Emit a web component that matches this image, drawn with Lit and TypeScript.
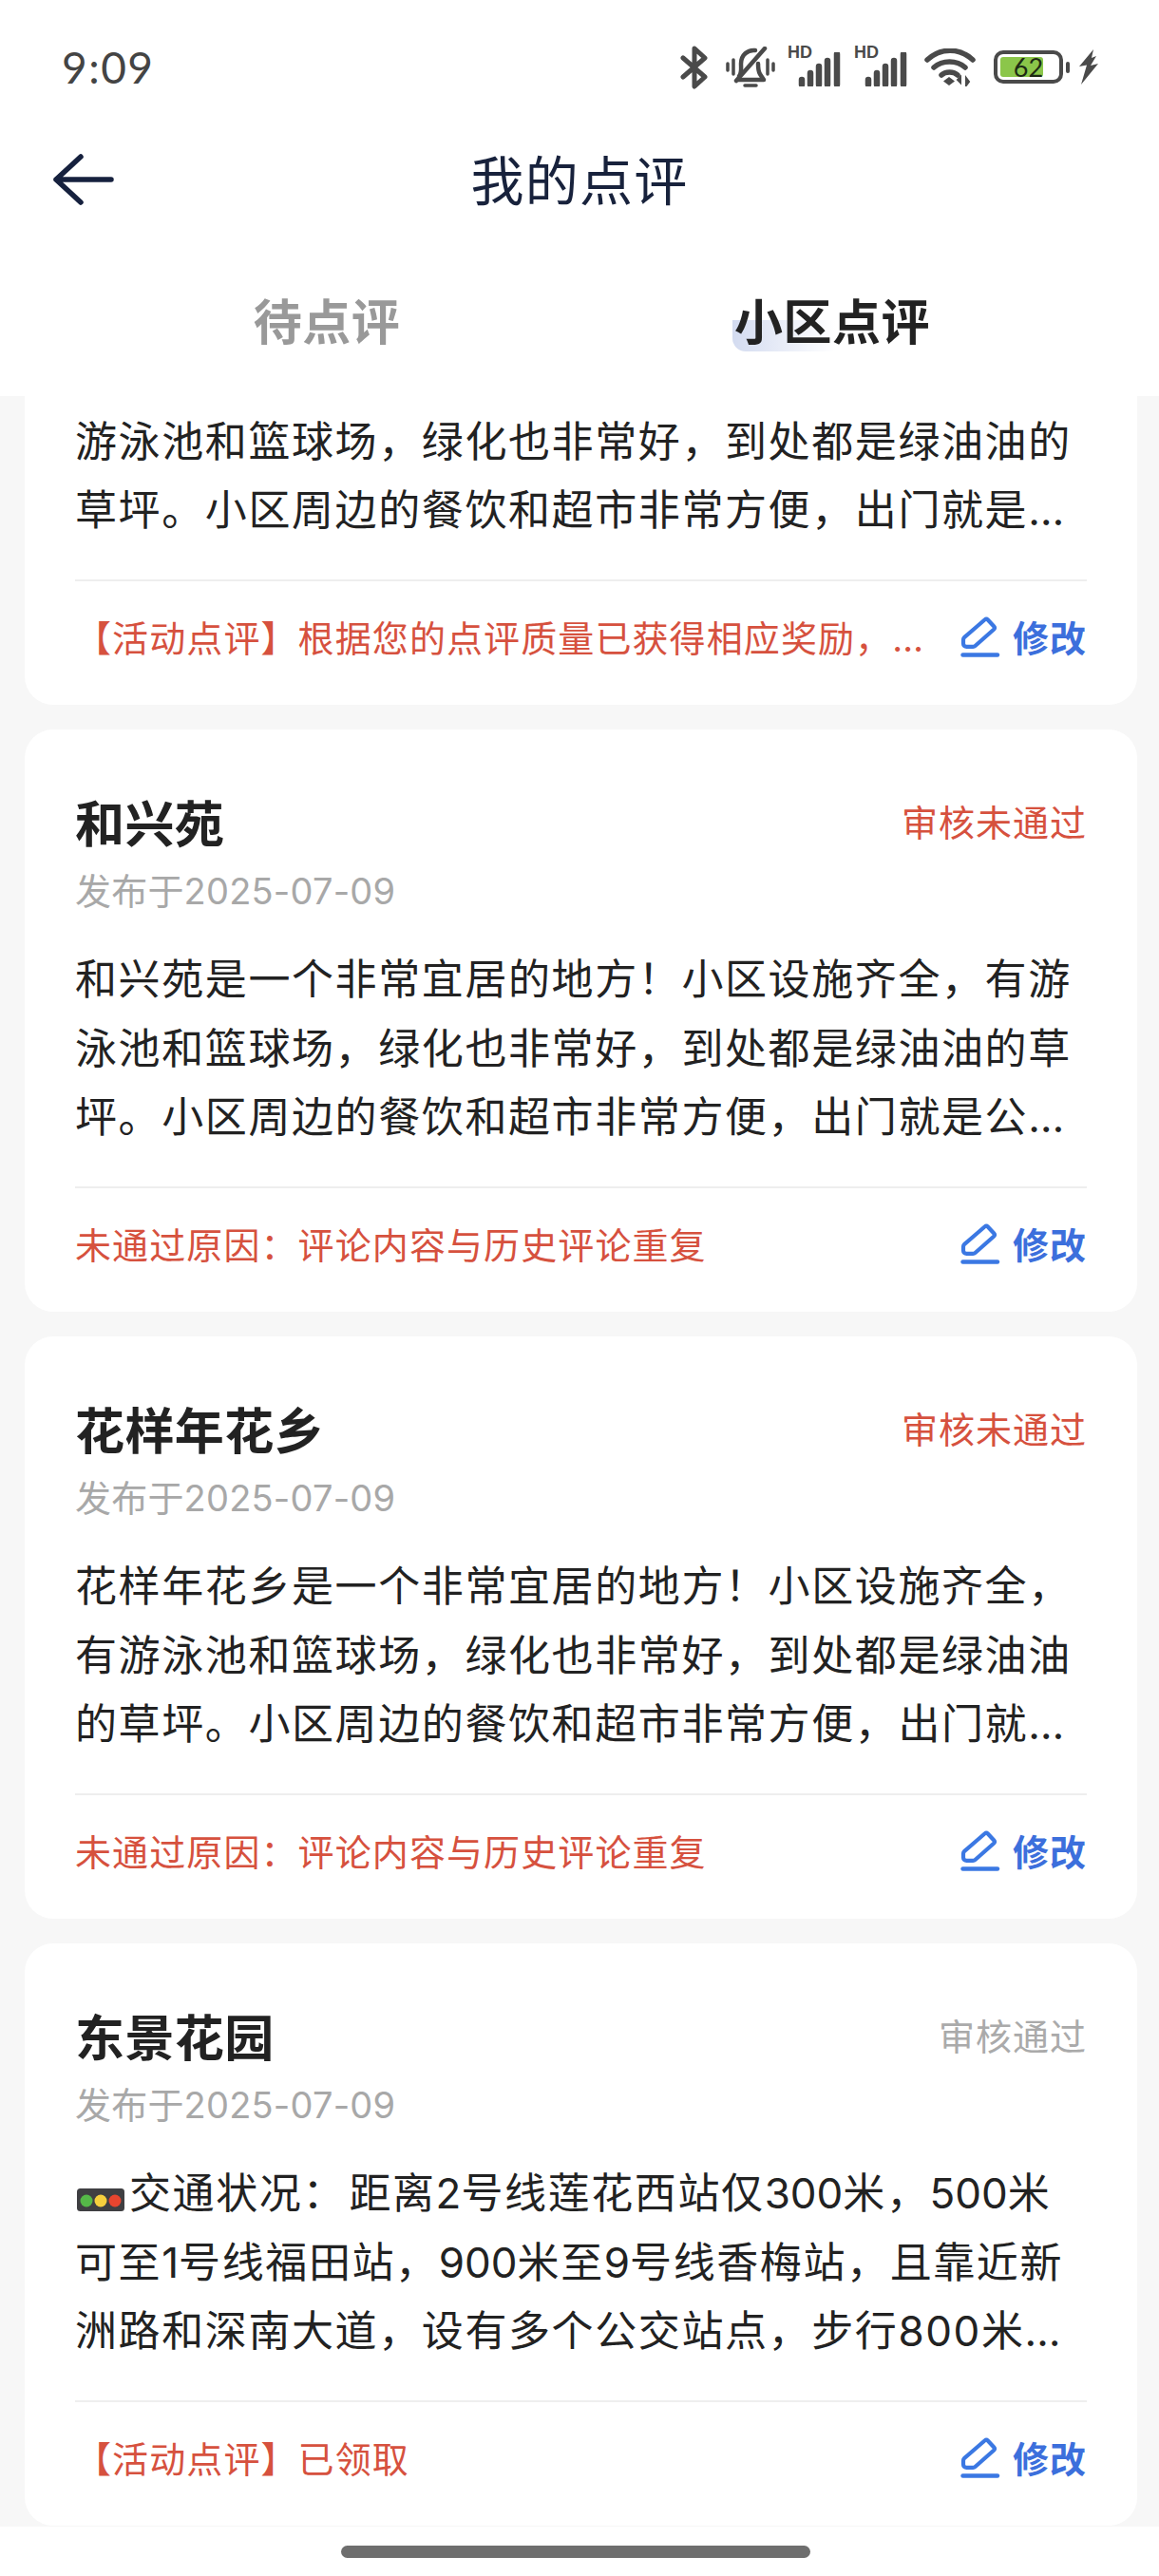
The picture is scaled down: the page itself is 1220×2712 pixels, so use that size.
import { LitElement, css, html, svg } from 'lit';
import { customElement } from 'lit/decorators.js';

interface Review {
  name: string;
  date: string;
  status: string;
  passed: boolean;
  body: unknown;
  note: string;
}

const trafficLights = html`<svg class="lights" width="50" height="24" viewBox="0 0 50 24"><rect width="50" height="24" rx="3.500" fill="#3f3f42"/><circle cx="10" cy="13" r="6.500" fill="#55b848"/><circle cx="25" cy="13" r="6.500" fill="#f6cf3d"/><circle cx="40" cy="13" r="6.500" fill="#e8452f"/></svg>`;

const REVIEWS: Review[] = [
  {
    name: '星河花园',
    date: '发布于2025-07-09',
    status: '审核通过',
    passed: true,
    body: '星河花园是一个非常宜居的地方！小区设施齐全，有游泳池和篮球场，绿化也非常好，到处都是绿油油的草坪。小区周边的餐饮和超市非常方便，出门就是公交站，生活非常便利。',
    note: '【活动点评】根据您的点评质量已获得相应奖励，请前往查看',
  },
  {
    name: '和兴苑',
    date: '发布于2025-07-09',
    status: '审核未通过',
    passed: false,
    body: '和兴苑是一个非常宜居的地方！小区设施齐全，有游泳池和篮球场，绿化也非常好，到处都是绿油油的草坪。小区周边的餐饮和超市非常方便，出门就是公交站，生活非常便利。',
    note: '未通过原因：评论内容与历史评论重复',
  },
  {
    name: '花样年花乡',
    date: '发布于2025-07-09',
    status: '审核未通过',
    passed: false,
    body: '花样年花乡是一个非常宜居的地方！小区设施齐全，有游泳池和篮球场，绿化也非常好，到处都是绿油油的草坪。小区周边的餐饮和超市非常方便，出门就是公交站，生活非常便利。',
    note: '未通过原因：评论内容与历史评论重复',
  },
  {
    name: '东景花园',
    date: '发布于2025-07-09',
    status: '审核通过',
    passed: true,
    // digits run narrower than the CJK tracking in the original
    body: html`${trafficLights}交通状况<span class="wide">：</span>距离<span class="num">2</span>号线莲花西站仅<span class="num">300</span>米，<span class="num">500</span>米可至<span class="num">1</span>号线福田站，<span class="num">900</span>米至<span class="num">9</span>号线香梅站，且靠近新洲路和深南大道，设有多个公交站点，步行800米即可到达地铁站，出行非常方便。`,
    note: '【活动点评】已领取',
  },
];

const bars = svg`
  <path d="M7 29v5M16 22v12M25 15v19M34 9v25M44 2v32" stroke="#4a4a4a" stroke-width="6.500" stroke-linecap="round" fill="none"/>
`;

const signal = html`
  <div class="signal">
    <span class="hd">HD</span>
    <svg width="51" height="36" viewBox="0 0 51 36">${bars}</svg>
  </div>
`;

const pencil = html`
  <svg width="42" height="44" viewBox="0 0 42 44" fill="none" stroke="#3b78e3" stroke-width="4.200" stroke-linecap="round" stroke-linejoin="round">
    <path d="M25.500 4.500c1.200-1 2.300-1 3.300 0l6.500 7c1 1.100 1 2.100 0 3L15.500 32c-.7.600-1.400.8-2.300.8H6.500c-2 0-3.500-1.300-3.500-3.300v-4c0-1.100.4-1.900 1.200-2.600z"/>
    <path d="M2.500 41.500h36.500" stroke-width="4.400"/>
  </svg>
`;

@customElement('app-root')
class AppRoot extends LitElement {
  static styles = css`
    :host {
      display: block;
      width: 1220px;
      height: 2712px;
      background: #fff;
      font-family: Inter, 'Noto Sans CJK SC', sans-serif;
      color: #222;
    }

    .page {
      display: flex;
      flex-direction: column;
      height: 2712px;
    }

    .status-bar {
      display: flex;
      align-items: center;
      height: 129px;
      padding: 12px 64px 0 65px;
      box-sizing: border-box;
    }

    .time {
      font-family: Lato, sans-serif;
      font-size: 46px;
      letter-spacing: 1.500px;
      color: #444;
      margin-right: auto;
    }

    .status-icons {
      display: flex;
      align-items: center;
    }

    .bt { margin-right: 18px; }
    .bell { margin-right: 13px; }
    .signal {
      position: relative;
      width: 59px;
      height: 40px;
      margin-right: 11px;
      display: flex;
      align-items: flex-end;
      justify-content: flex-end;
    }
    .hd {
      position: absolute;
      left: 0;
      top: -5px;
      font-family: 'Liberation Sans', sans-serif;
      font-weight: 700;
      font-size: 18px;
      line-height: 18px;
      color: #4a4a4a;
    }
    .wifi { margin: 0 19px 0 4px; }

    .battery {
      position: relative;
      width: 73px;
      height: 35px;
      box-sizing: border-box;
      border: 4px solid #4a4a4a;
      border-radius: 10px;
      padding: 3px;
    }
    .battery-fill {
      width: 45px;
      height: 100%;
      background: #8bc64a;
      border-radius: 3px;
    }
    .battery-text {
      position: absolute;
      inset: 0;
      display: flex;
      align-items: center;
      justify-content: center;
      font-family: Lato, sans-serif;
      font-size: 27px;
      color: #1d2a14;
    }
    .battery-tip {
      width: 4px;
      height: 12px;
      margin: 0 9px 0 3px;
      background: #4a4a4a;
      border-radius: 2px;
    }

    .nav {
      position: relative;
      display: flex;
      align-items: center;
      justify-content: center;
      height: 120px;
      padding-bottom: 6px;
      box-sizing: border-box;
    }
    .back {
      position: absolute;
      left: 54px;
      top: 31px;
    }
    .nav-title {
      font-size: 56px;
      color: #18223c;
      letter-spacing: 1.300px;
    }

    .tabs {
      display: flex;
      height: 158px;
      margin-top: 10px;
      padding: 0 78px;
      box-sizing: border-box;
    }
    .tab {
      flex: 1;
      display: flex;
      align-items: center;
      justify-content: center;
      padding-bottom: 4px;
      font-size: 51px;
      font-weight: 700;
      letter-spacing: .500px;
      color: #999;
    }
    .tab.active { color: #222; }
    .tab-label {
      position: relative;
      z-index: 0;
    }
    .tab.active .tab-label::after {
      content: '';
      position: absolute;
      z-index: -1;
      left: -2px;
      top: 38px;
      width: 108px;
      height: 33px;
      border-radius: 0 0 0 14px;
      background: linear-gradient(90deg, #d3dbf0, #fff);
    }

    .list {
      height: 2243px;
      overflow: hidden;
      background: #f7f7f7;
    }
    .cards {
      display: flex;
      flex-direction: column;
      gap: 26px;
      margin: -288px 23px 0 26px;
    }

    .card {
      box-sizing: border-box;
      height: 613px;
      padding: 70px 53px 0;
      background: #fff;
      border-radius: 30px;
    }
    .card-head {
      display: flex;
      justify-content: space-between;
      align-items: flex-start;
    }
    .name {
      font-size: 52px;
      line-height: 62px;
      font-weight: 700;
      letter-spacing: .400px;
    }
    .state {
      font-size: 38px;
      line-height: 56px;
      letter-spacing: 1px;
      color: #d6513e;
    }
    .state.passed { color: #aaa; }
    .date {
      margin-top: 13px;
      font-size: 38px;
      line-height: 50px;
      letter-spacing: .200px;
      color: #a8a8a8;
    }
    .body {
      margin-top: 32px;
      font-size: 44px;
      line-height: 72.500px;
      letter-spacing: 1.600px;
      display: -webkit-box;
      -webkit-box-orient: vertical;
      -webkit-line-clamp: 3;
      overflow: hidden;
    }
    .lights {
      vertical-align: -3px;
      margin: 0 5px 0 2px;
    }
    .num { letter-spacing: 0; }
    .wide { letter-spacing: 5px; }
    .divider {
      height: 2px;
      margin-top: 36px;
      background: #eee;
    }
    .foot {
      display: flex;
      align-items: center;
      height: 116px;
    }
    .note {
      flex: 1;
      min-width: 0;
      font-size: 38px;
      letter-spacing: 1.100px;
      color: #d6513e;
      white-space: nowrap;
      overflow: hidden;
      text-overflow: ellipsis;
    }
    .edit {
      flex: none;
      display: flex;
      align-items: center;
      gap: 13px;
      margin-left: 28px;
      font-size: 38px;
      font-weight: 700;
      letter-spacing: 1px;
      color: #3c6fdc;
    }

    .home-bar {
      flex: 1;
      display: flex;
      justify-content: center;
      padding-top: 20px;
    }
    .home-bar span {
      width: 494px;
      height: 13px;
      margin-right: 8px;
      background: #6e6e6e;
      border-radius: 7px;
    }
  `;

  renderCard(r: Review) {
    return html`
      <div class="card">
        <div class="card-head">
          <div class="name">${r.name}</div>
          <div class="state ${r.passed ? 'passed' : ''}">${r.status}</div>
        </div>
        <div class="date">${r.date}</div>
        <div class="body">${r.body}</div>
        <div class="divider"></div>
        <div class="foot">
          <div class="note">${r.note}</div>
          <div class="edit">${pencil}<span>修改</span></div>
        </div>
      </div>
    `;
  }

  render() {
    return html`
      <div class="page">
        <div class="status-bar">
          <div class="time">9:09</div>
          <div class="status-icons">
            <svg class="bt" width="30" height="46" viewBox="0 0 30 46" fill="none" stroke="#4a4a4a" stroke-width="5" stroke-linejoin="round" stroke-linecap="round">
              <path d="M3 13l23 20-11 10V3l11 10L3 33"/>
            </svg>
            <svg class="bell" width="52" height="44" viewBox="0 0 52 44" fill="none" stroke="#4a4a4a" stroke-width="4.500" stroke-linecap="round" stroke-linejoin="round">
              <path d="M2 18v7M8 14v15M44 14v15M50 18v7" stroke-width="3.500"/>
              <path d="M14 31c3-3 2-8 2-13 0-9 7-15 15-14"/>
              <path d="M13 35h27l-4-6c-2-3-2-7-2-11"/>
              <path d="M41 2L11 36"/>
              <path d="M20 41h12" stroke-width="3.500"/>
            </svg>
            ${signal}${signal}
            <svg class="wifi" width="54" height="40" viewBox="0 0 54 40" fill="none" stroke="#4a4a4a" stroke-width="5.500" stroke-linecap="round">
              <path d="M3 12c14-13 34-13 48 0"/>
              <path d="M10 20c9-8 24-8 33 0"/>
              <path d="M18 28c4-4 13-4 17 0"/>
              <path d="M26 30l6 4.500-6 4.500-6-4.500z" fill="#4a4a4a" stroke="none"/>
              <path d="M38 30v6l-3-3zM44 39v-8l3 4z" fill="#4a4a4a" stroke="#4a4a4a" stroke-width="2" stroke-linecap="butt"/>
            </svg>
            <div class="battery">
              <div class="battery-fill"></div>
              <div class="battery-text">62</div>
            </div>
            <div class="battery-tip"></div>
            <svg width="21" height="37" viewBox="0 0 21 37" fill="#4a4a4a">
              <path d="M16 0L1 18l8-1.500L3 37l18-22-8 2 6-10-5 2z"/>
            </svg>
          </div>
        </div>

        <div class="nav">
          <svg class="back" width="68" height="58" viewBox="0 0 68 58" fill="none" stroke="#16213e" stroke-width="5.500" stroke-linecap="round" stroke-linejoin="round">
            <path d="M31 5L5 29l26 24M5 29h58"/>
          </svg>
          <div class="nav-title">我的点评</div>
        </div>

        <div class="tabs">
          <div class="tab"><span class="tab-label">待点评</span></div>
          <div class="tab active"><span class="tab-label">小区点评</span></div>
        </div>

        <div class="list">
          <div class="cards">${REVIEWS.map((r) => this.renderCard(r))}</div>
        </div>

        <div class="home-bar"><span></span></div>
      </div>
    `;
  }
}

export default AppRoot;
